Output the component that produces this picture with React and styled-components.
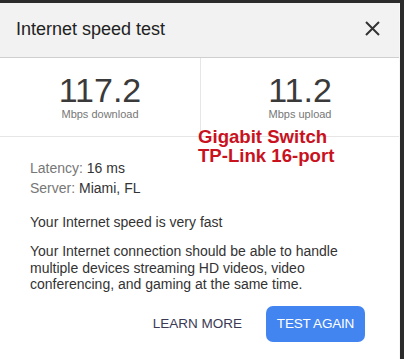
import React from "react";
import styled, { createGlobalStyle } from "styled-components";

const GlobalStyle = createGlobalStyle`
  html, body {
    margin: 0;
    padding: 0;
    background: #2b2b2b;
    font-family: "Liberation Sans", Arial, sans-serif;
  }
`;

const Card = styled.div`
  position: relative;
  width: 399px;
  height: 356px;
  margin-top: 3px;
  background: #fff;
  border-right: 1px solid #f7f7f7;
  overflow: hidden;
`;

const Header = styled.div`
  height: 54px;
  display: flex;
  align-items: center;
  justify-content: space-between;
  padding: 0 19px 0 16px;
  background: #f2f2f2;
  border-bottom: 1px solid #cfcfcf;
`;

const Title = styled.div`
  font-size: 18px;
  color: #222;
  margin-top: -2px;
`;

const Close = styled.button`
  display: flex;
  padding: 0;
  border: 0;
  background: none;
  margin-top: -4px;
`;

const Stats = styled.div`
  display: grid;
  grid-template-columns: 200px 1fr;
  border-bottom: 1px solid #e6e6e6;
`;

const Stat = styled.div`
  display: flex;
  flex-direction: column;
  align-items: center;
  padding: 14px 0 15px;
  border-left: ${(p) => (p.$divided ? "1px solid #e6e6e6" : "none")};
`;

const Value = styled.div`
  font-size: 34px;
  line-height: 36px;
  color: #3a3a3a;
`;

const Unit = styled.div`
  font-size: 11px;
  line-height: 13px;
  color: #777;
`;

const Body = styled.div`
  padding: 22px 30px 0 30px;
  font-size: 14px;
  color: #333;
`;

const InfoLine = styled.div`
  line-height: 19.5px;
`;

const Label = styled.span`
  color: #777;
`;

const Verdict = styled.div`
  margin-top: 15px;
  line-height: 18px;
`;

const Para = styled.p`
  margin: 12px 0 0;
  line-height: 16.5px;
`;

const Actions = styled.div`
  display: flex;
  justify-content: flex-end;
  align-items: center;
  gap: 24px;
  margin-top: 13px;
  padding-right: 4px;
`;

const TextButton = styled.button`
  border: 0;
  background: none;
  padding: 0;
  font-family: inherit;
  font-size: 13.5px;
  color: #3b3a55;
  text-transform: uppercase;
`;

const Primary = styled.button`
  width: 99px;
  height: 36px;
  border: 0;
  border-radius: 7px;
  background: #4285f0;
  color: #fff;
  font-family: inherit;
  font-size: 13.5px;
  letter-spacing: -0.2px;
  padding: 0;
`;

const Note = styled.div`
  position: absolute;
  left: 198px;
  top: 124px;
  font-weight: bold;
  font-size: 18.6px;
  line-height: 19px;
  color: #c8121e;
`;

export default function App() {
  return (
    <>
      <GlobalStyle />
      <Card>
        <Header>
          <Title>Internet speed test</Title>
          <Close aria-label="Close">
            <svg width="15" height="15" viewBox="0 0 15 15">
              <path d="M1 1L14 14M14 1L1 14" stroke="#333" strokeWidth="2" />
            </svg>
          </Close>
        </Header>
        <Stats>
          <Stat>
            <Value>117.2</Value>
            <Unit>Mbps download</Unit>
          </Stat>
          <Stat $divided>
            <Value>11.2</Value>
            <Unit>Mbps upload</Unit>
          </Stat>
        </Stats>
        <Body>
          <InfoLine>
            <Label>Latency:</Label> 16 ms
          </InfoLine>
          <InfoLine>
            <Label>Server:</Label> Miami, FL
          </InfoLine>
          <Verdict>Your Internet speed is very fast</Verdict>
          <Para>
            Your Internet connection should be able to handle multiple devices
            streaming HD videos, video conferencing, and gaming at the same time.
          </Para>
          <Actions>
            <TextButton>Learn more</TextButton>
            <Primary>TEST AGAIN</Primary>
          </Actions>
        </Body>
        <Note>
          Gigabit Switch
          <br />
          TP-Link 16-port
        </Note>
      </Card>
    </>
  );
}
